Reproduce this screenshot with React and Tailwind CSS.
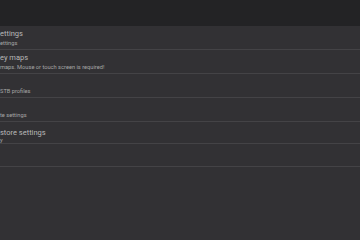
import React from "react";

const rows = [
  { title: "ettings", sub: "ettings", h: "h-[24px]" },
  { title: "ey maps", sub: "maps. Mouse or touch screen is required!", h: "h-[24px]" },
  { title: "", sub: "STB profiles", h: "h-[24px]" },
  { title: "", sub: "te settings", h: "h-[24px]" },
  { title: "store settings", sub: "y", h: "h-[22px]", compact: true },
  { title: "", sub: "", h: "h-[23px]" },
];

const App = () => {
  return (
    <div
      className="w-[360px] h-[240px] overflow-hidden flex flex-col bg-[#323134]"
      style={{ fontFamily: "Roboto, 'Noto Sans', sans-serif" }}
    >
      {/* Action bar */}
      <div className="h-[26px] shrink-0 bg-[#232325]" />

      {/* Preference list */}
      <div className="flex flex-col">
        {rows.map((r, i) => (
          <div
            key={i}
            className={`${r.h} flex flex-col border-b border-[#444346] overflow-hidden ${
              r.compact ? "pt-[6px]" : "pt-[3px]"
            }`}
          >
            <div className="text-[7.5px] leading-[10px] h-[10px] text-[#b8b8b8] whitespace-nowrap">
              {r.title}
            </div>
            <div
              className={`text-[5.7px] leading-[8px] text-[#a6a6a6] whitespace-nowrap ${
                r.compact ? "-mt-[2px]" : ""
              }`}
            >
              {r.sub}
            </div>
          </div>
        ))}
      </div>
    </div>
  );
};

export default App;
